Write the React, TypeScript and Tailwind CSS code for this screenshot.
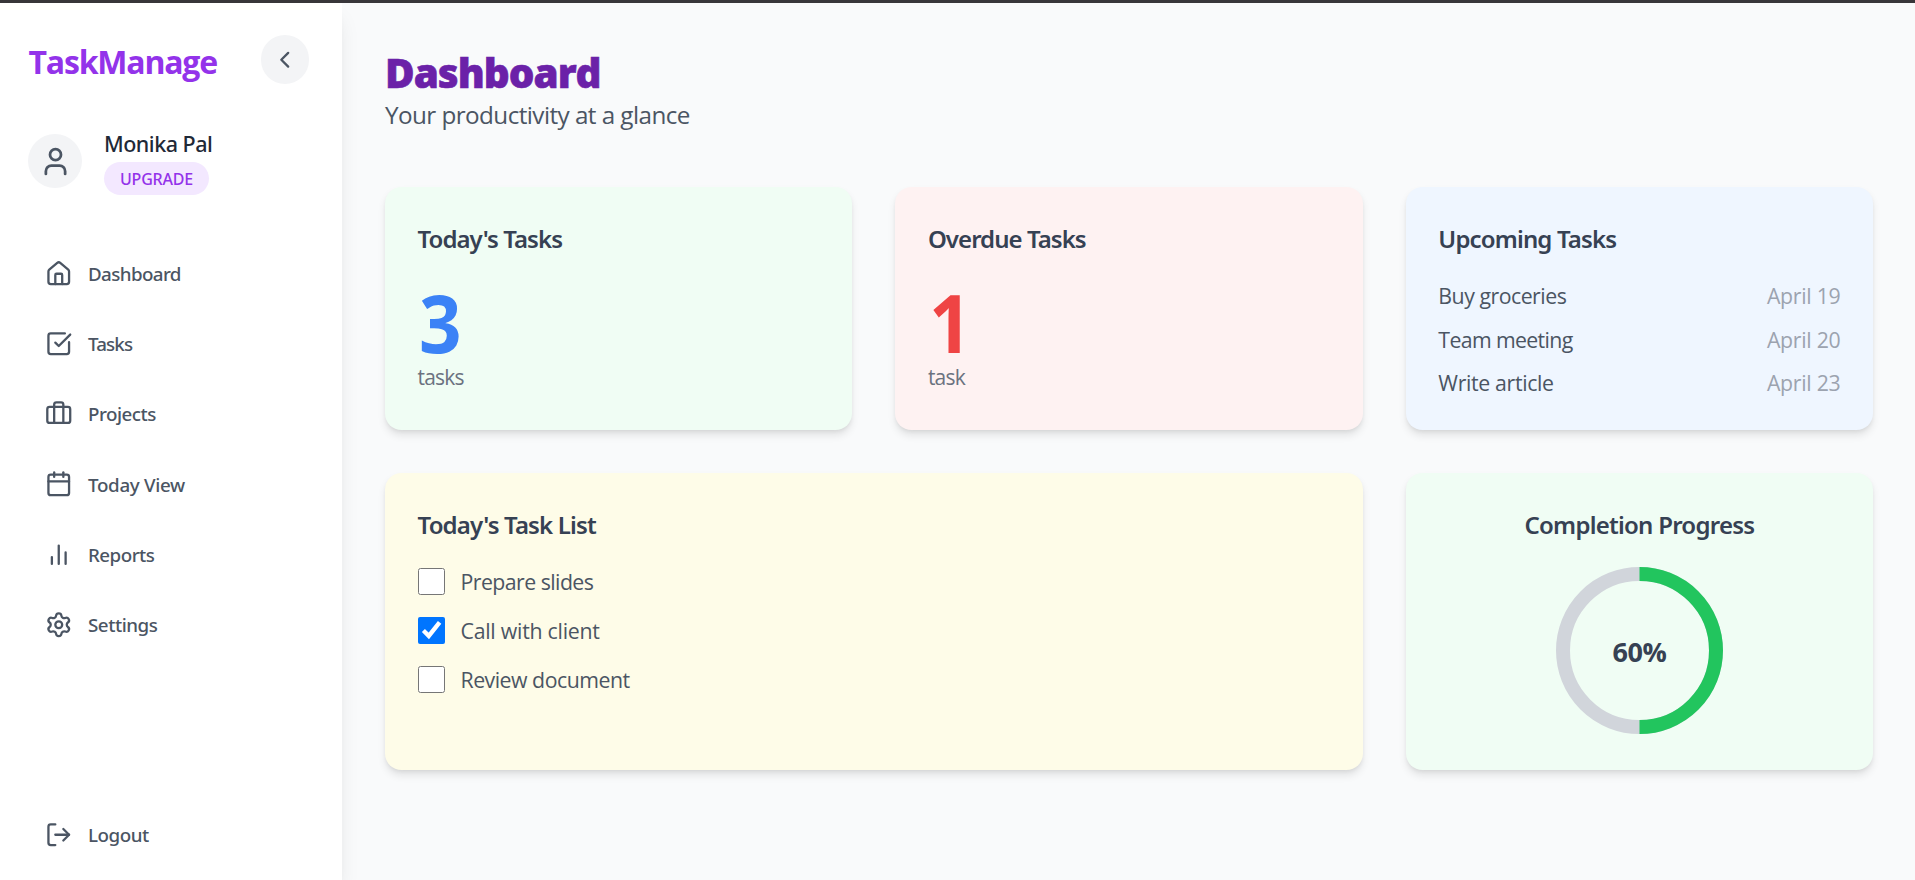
import React, { useState } from "react";
import {
  Briefcase,
  Calendar,
  ChevronLeft,
  House,
  LogOut,
  Settings,
  SquareCheckBig,
  User,
} from "lucide-react";

function BarsIcon() {
  return (
    <svg
      className="size-[27.5px] shrink-0"
      viewBox="0 0 24 24"
      fill="none"
      stroke="currentColor"
      strokeWidth={2}
      strokeLinecap="round"
      strokeLinejoin="round"
    >
      <path d="M18 20V10M12 20V4M6 20v-6" />
    </svg>
  );
}

const navIcon = "size-[27.5px] shrink-0";

const navItems = [
  { label: "Dashboard", icon: <House className={navIcon} />, tracking: "tracking-[-0.6px]" },
  { label: "Tasks", icon: <SquareCheckBig className={navIcon} />, tracking: "tracking-[-0.85px]" },
  { label: "Projects", icon: <Briefcase className={navIcon} />, tracking: "tracking-[-0.5px]" },
  { label: "Today View", icon: <Calendar className={navIcon} />, tracking: "tracking-[-0.3px]" },
  { label: "Reports", icon: <BarsIcon />, tracking: "tracking-[-0.5px]" },
  { label: "Settings", icon: <Settings className={navIcon} />, tracking: "tracking-[-0.45px]" },
];

const upcoming = [
  { name: "Buy groceries", date: "April 19", tracking: "tracking-[-0.5px]" },
  { name: "Team meeting", date: "April 20", tracking: "tracking-[-0.65px]" },
  { name: "Write article", date: "April 23", tracking: "tracking-[-0.35px]" },
];

const initialTasks = [
  { name: "Prepare slides", done: false, tracking: "tracking-[-0.55px]" },
  { name: "Call with client", done: true, tracking: "tracking-[-0.25px]" },
  { name: "Review document", done: false, tracking: "tracking-[-0.5px]" },
];

const cardBase =
  "rounded-[16.5px] p-[32.5px] shadow-[0_5.5px_8.25px_-1.4px_rgba(0,0,0,0.1),0_2.75px_5.5px_-2.75px_rgba(0,0,0,0.1)]";

function CardTitle({ children, className = "" }: { children: React.ReactNode; className?: string }) {
  return (
    <h2
      className={`pt-[1.5px] font-['Noto_Sans',sans-serif] text-[24px] leading-[36px] font-semibold text-gray-700 ${className}`}
    >
      {children}
    </h2>
  );
}

function CountCard({
  title,
  count,
  unit,
  background,
  color,
}: {
  title: string;
  count: number;
  unit: string;
  background: string;
  color: string;
}) {
  return (
    <section className={`${cardBase} ${background}`}>
      <CardTitle className="tracking-[-0.95px]">{title}</CardTitle>
      <p
        className={`mt-[24.5px] origin-left scale-x-[0.93] pl-[1px] text-[80px] leading-[80px] font-bold ${color}`}
      >
        {count}
      </p>
      <p className="text-[21px] leading-[31px] tracking-[-0.8px] text-[#6b7280]">{unit}</p>
    </section>
  );
}

function NavRow({ icon, label, tracking }: { icon: React.ReactNode; label: string; tracking: string }) {
  return (
    <a className="flex h-[70.2px] items-center gap-4 px-[16.5px]">
      {icon}
      <span
        className={`font-['Noto_Sans',sans-serif] text-[18.75px] leading-[27px] font-medium ${tracking}`}
      >
        {label}
      </span>
    </a>
  );
}

function Sidebar() {
  return (
    <aside className="z-10 flex w-[342px] shrink-0 flex-col bg-white px-[28px] pt-[32px] text-[#4b5563] shadow-[0_13.75px_20.6px_-4px_rgba(0,0,0,0.1),0_5.5px_8.25px_-5.5px_rgba(0,0,0,0.1)]">
      <div className="flex items-center justify-between pr-[5px]">
        <span className="pt-[4px] pl-[0.5px] text-[32px] leading-[44px] font-bold tracking-[-1.2px] text-[#9333ea]">
          TaskManage
        </span>
        <button className="flex h-[49px] w-[48px] items-center justify-center rounded-full bg-[#f3f4f6]">
          <ChevronLeft className="size-[27.5px]" />
        </button>
      </div>

      <div className="mt-[43px] flex items-center gap-[22px]">
        <div className="flex size-[54px] items-center justify-center rounded-full bg-[#f3f4f6]">
          <User className="size-[33px]" />
        </div>
        <div className="flex flex-col items-start gap-[2px]">
          <span className="font-['Noto_Sans',sans-serif] text-[21.5px] leading-[33px] font-medium tracking-[-0.5px] text-[#1f2937]">
            Monika Pal
          </span>
          <span className="rounded-full bg-[#f3e8ff] px-[16px] pt-[1px] font-['Noto_Sans',sans-serif] text-[16px] leading-[32px] font-medium tracking-[-0.2px] text-[#9333ea]">
            UPGRADE
          </span>
        </div>
      </div>

      <nav className="mt-[43.5px] flex flex-col">
        {navItems.map((item) => (
          <NavRow key={item.label} {...item} />
        ))}
      </nav>

      <div className="mt-auto pb-[10.5px]">
        <NavRow
          label="Logout"
          icon={<LogOut className={navIcon} />}
          tracking="tracking-[-0.45px]"
        />
      </div>
    </aside>
  );
}

function ProgressRing() {
  return (
    <div className="mt-[24.3px] grid place-items-center">
      <svg className="col-start-1 row-start-1 size-[167px]" viewBox="0 0 167 167" fill="none" strokeWidth={14}>
        <circle cx="83.5" cy="83.5" r="76.5" stroke="#d1d5db" />
        <path d="M83.5 7a76.5 76.5 0 0 1 0 153" stroke="#22c55e" />
      </svg>
      <span className="col-start-1 row-start-1 pt-[2px] text-[27px] leading-[38px] font-bold tracking-[-0.4px] text-gray-700">
        60%
      </span>
    </div>
  );
}

export default function App() {
  const [tasks, setTasks] = useState(initialTasks);
  const toggle = (index: number) =>
    setTasks(tasks.map((t, i) => (i === index ? { ...t, done: !t.done } : t)));

  return (
    <div className="flex h-[880px] flex-col overflow-hidden bg-[#f9fafb] font-['Open_Sans','Noto_Sans',sans-serif]">
      <div className="z-20 h-[3px] shrink-0 bg-[#38363a]" />
      <div className="flex min-h-0 flex-1">
        <Sidebar />
        <main className="flex-1 pt-[45px] pr-[42px] pl-[43px]">
          <h1 className="text-[40.4px] leading-[50px] font-extrabold tracking-[-1px] text-[#6b21a8] [-webkit-text-stroke:0.6px_#6b21a8]">
            Dashboard
          </h1>
          <p className="text-[24.25px] leading-[34px] tracking-[-0.56px] text-[#4b5563]">
            Your productivity at a glance
          </p>

          <div className="mt-[55px] grid grid-cols-3 grid-rows-[243px_297px] gap-x-[43.3px] gap-y-[43px]">
            <CountCard
              title="Today's Tasks"
              count={3}
              unit="tasks"
              background="bg-[#f0fdf4]"
              color="text-[#3b82f6]"
            />
            <CountCard
              title="Overdue Tasks"
              count={1}
              unit="task"
              background="bg-[#fef2f2]"
              color="text-[#ef4444]"
            />

            <section className={`${cardBase} bg-[#eff6ff]`}>
              <CardTitle className="tracking-[-0.85px]">Upcoming Tasks</CardTitle>
              <ul className="mt-[22px] flex flex-col gap-[10.5px] text-[21.3px] leading-[33px]">
                {upcoming.map((item) => (
                  <li key={item.name} className="flex justify-between">
                    <span className={`text-[#4b5563] ${item.tracking}`}>{item.name}</span>
                    <span className="tracking-[-0.28px] text-[#9ca3af]">{item.date}</span>
                  </li>
                ))}
              </ul>
            </section>

            <section className={`${cardBase} col-span-2 bg-[#fefce8]`}>
              <CardTitle className="tracking-[-0.85px]">Today's Task List</CardTitle>
              <ul className="mt-[21.5px] flex flex-col gap-4 text-[21.3px] leading-[33px] text-[#4b5563]">
                {tasks.map((task, i) => (
                  <li key={task.name}>
                    <label className="flex items-center gap-[16px]">
                      <input
                        type="checkbox"
                        className="size-[27px] shrink-0"
                        checked={task.done}
                        onChange={() => toggle(i)}
                      />
                      <span className={`pt-[1px] leading-[32px] ${task.tracking}`}>{task.name}</span>
                    </label>
                  </li>
                ))}
              </ul>
            </section>

            <section className={`${cardBase} bg-[#f0fdf4]`}>
              <CardTitle className="text-center tracking-[-0.75px]">Completion Progress</CardTitle>
              <ProgressRing />
            </section>
          </div>
        </main>
      </div>
    </div>
  );
}
